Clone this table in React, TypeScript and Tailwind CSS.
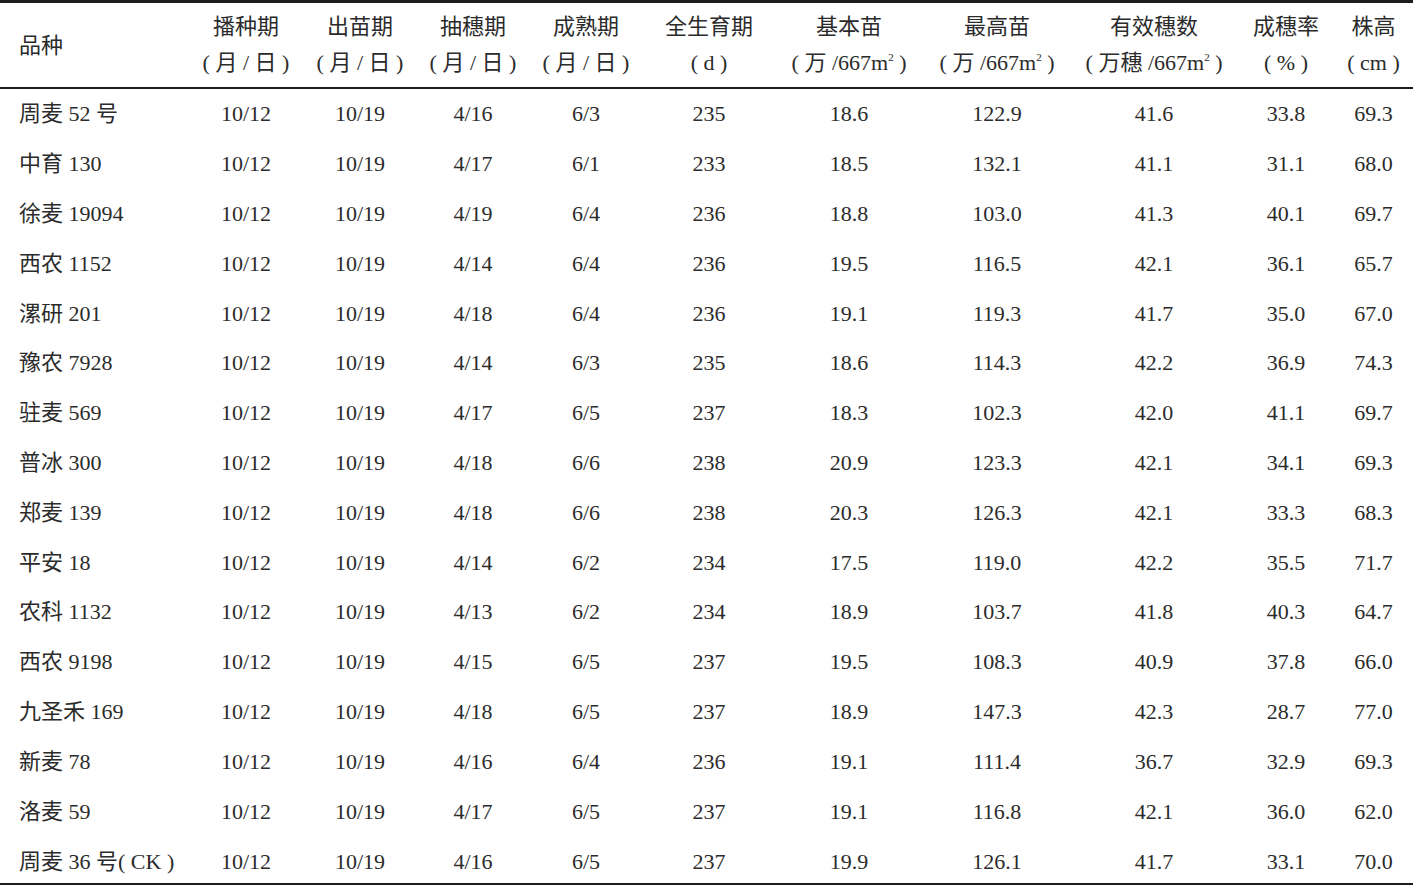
const rows: string[][] = [
  ["周麦 52 号", "10/12", "10/19", "4/16", "6/3", "235", "18.6", "122.9", "41.6", "33.8", "69.3"],
  ["中育 130", "10/12", "10/19", "4/17", "6/1", "233", "18.5", "132.1", "41.1", "31.1", "68.0"],
  ["徐麦 19094", "10/12", "10/19", "4/19", "6/4", "236", "18.8", "103.0", "41.3", "40.1", "69.7"],
  ["西农 1152", "10/12", "10/19", "4/14", "6/4", "236", "19.5", "116.5", "42.1", "36.1", "65.7"],
  ["漯研 201", "10/12", "10/19", "4/18", "6/4", "236", "19.1", "119.3", "41.7", "35.0", "67.0"],
  ["豫农 7928", "10/12", "10/19", "4/14", "6/3", "235", "18.6", "114.3", "42.2", "36.9", "74.3"],
  ["驻麦 569", "10/12", "10/19", "4/17", "6/5", "237", "18.3", "102.3", "42.0", "41.1", "69.7"],
  ["普冰 300", "10/12", "10/19", "4/18", "6/6", "238", "20.9", "123.3", "42.1", "34.1", "69.3"],
  ["郑麦 139", "10/12", "10/19", "4/18", "6/6", "238", "20.3", "126.3", "42.1", "33.3", "68.3"],
  ["平安 18", "10/12", "10/19", "4/14", "6/2", "234", "17.5", "119.0", "42.2", "35.5", "71.7"],
  ["农科 1132", "10/12", "10/19", "4/13", "6/2", "234", "18.9", "103.7", "41.8", "40.3", "64.7"],
  ["西农 9198", "10/12", "10/19", "4/15", "6/5", "237", "19.5", "108.3", "40.9", "37.8", "66.0"],
  ["九圣禾 169", "10/12", "10/19", "4/18", "6/5", "237", "18.9", "147.3", "42.3", "28.7", "77.0"],
  ["新麦 78", "10/12", "10/19", "4/16", "6/4", "236", "19.1", "111.4", "36.7", "32.9", "69.3"],
  ["洛麦 59", "10/12", "10/19", "4/17", "6/5", "237", "19.1", "116.8", "42.1", "36.0", "62.0"],
  ["周麦 36 号( CK )", "10/12", "10/19", "4/16", "6/5", "237", "19.9", "126.1", "41.7", "33.1", "70.0"],
];

const cols =
  "grid grid-cols-[190px_112px_116px_110px_116px_130px_150px_146px_168px_96px_79px]";

function Unit({ pre }: { pre: string }) {
  return (
    <span>
      ( {pre}/667m<sup className="text-[11px] -top-[9px]">2</sup> )
    </span>
  );
}

const heads: { top: string; bottom: React.ReactNode }[] = [
  { top: "播种期", bottom: "( 月 / 日 )" },
  { top: "出苗期", bottom: "( 月 / 日 )" },
  { top: "抽穗期", bottom: "( 月 / 日 )" },
  { top: "成熟期", bottom: "( 月 / 日 )" },
  { top: "全生育期", bottom: "( d )" },
  { top: "基本苗", bottom: <Unit pre="万 " /> },
  { top: "最高苗", bottom: <Unit pre="万 " /> },
  { top: "有效穗数", bottom: <Unit pre="万穗 " /> },
  { top: "成穗率", bottom: "( % )" },
  { top: "株高", bottom: "( cm )" },
];

export default function App() {
  return (
    <div
      className="w-[1413px] h-[885px] bg-white text-[#2b2b2b] text-[22px] overflow-hidden"
      style={{ fontFamily: "'Liberation Serif', 'Noto Sans CJK SC', serif" }}
    >
      <div className="border-t-[3px] border-b-2 border-[#1c1c1c]">
        <div className={`${cols} h-[84px] items-center`}>
          <div className="pl-[19px] pt-[1px]">品种</div>
          {heads.map((h, i) => (
            <div key={i} className="flex flex-col items-center whitespace-pre leading-none">
              <div className="h-[36px] flex items-center">{h.top}</div>
              <div className="h-[36px] flex items-center">{h.bottom}</div>
            </div>
          ))}
        </div>
      </div>
      <div className="border-b-2 border-[#1c1c1c]">
        {rows.map((r, i) => (
          <div
            key={i}
            className={`${cols} items-center leading-none ${
              i === rows.length - 1 ? "h-[47.5px] pt-[4px]" : "h-[49.8px] pt-[1px]"
            }`}
          >
            {r.map((c, j) => (
              <div
                key={j}
                className={j === 0 ? "pl-[19px] whitespace-nowrap" : "text-center whitespace-nowrap"}
              >
                {c}
              </div>
            ))}
          </div>
        ))}
      </div>
    </div>
  );
}
